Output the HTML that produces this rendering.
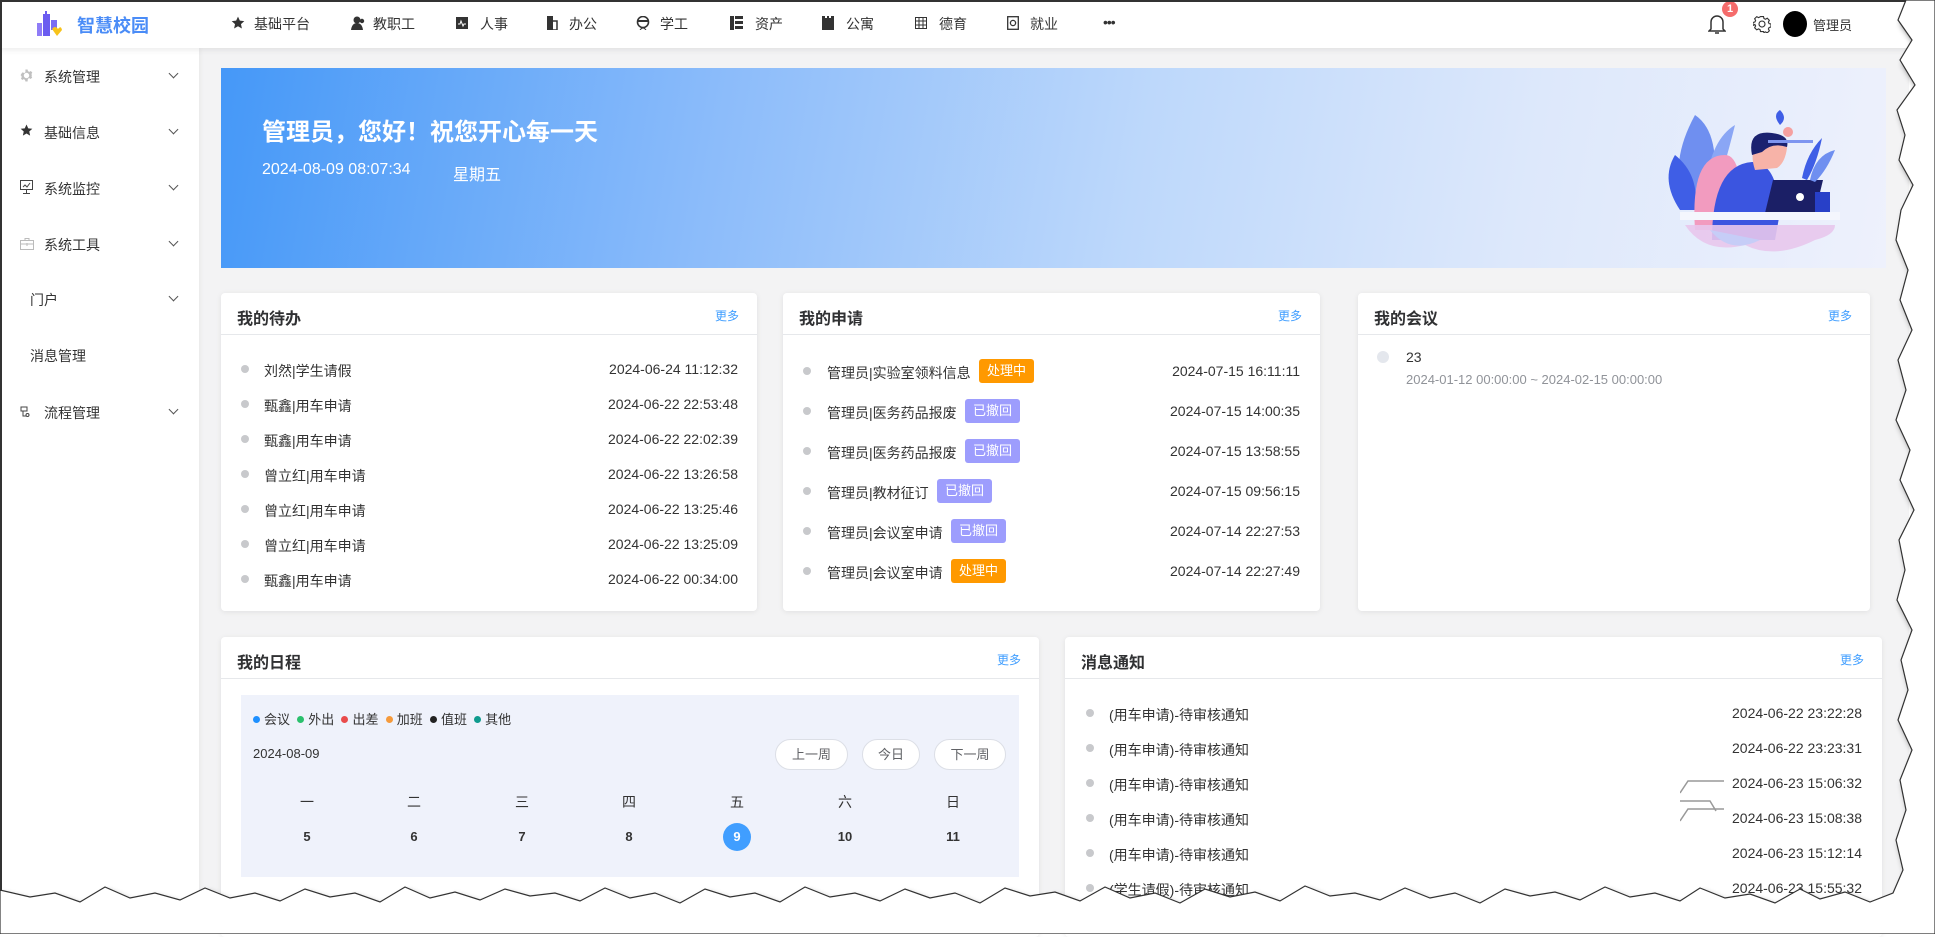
<!DOCTYPE html>
<html><head><meta charset="utf-8">
<style>
*{margin:0;padding:0;box-sizing:border-box}
body{width:1935px;height:934px;overflow:hidden;background:#fff;font-family:"Liberation Sans","Noto Sans CJK SC",sans-serif;color:#333;position:relative}
.a{position:absolute;white-space:nowrap}
#main{position:absolute;left:199px;top:48px;width:1710px;height:860px;background:#f3f3f4}
#nav{position:absolute;left:0;top:0;width:1935px;height:48px;background:#fff;box-shadow:0 2px 6px rgba(0,0,0,.08);z-index:2}
#side{position:absolute;left:0;top:48px;width:199px;height:860px;background:#fff;box-shadow:2px 0 4px rgba(0,0,0,.04)}
.navi{font-size:14px;color:#333;top:14px}
.side{font-size:14px;color:#333;left:44px}
.chev{left:170px;width:7px;height:7px;border-right:1px solid #555;border-bottom:1px solid #555;transform:rotate(45deg)}
.card{position:absolute;background:#fff;border-radius:4px;box-shadow:0 1px 6px rgba(0,0,0,.08)}
.card .hd{position:absolute;left:0;right:0;top:0;height:42px;border-bottom:1px solid #e6e8eb}
.card .tt{position:absolute;left:16px;top:12px;font-size:16px;font-weight:bold;color:#303133}
.card .more{position:absolute;right:18px;top:14px;font-size:12px;color:#409eff}
.dot{position:absolute;width:8px;height:8px;border-radius:50%;background:#c8c9cc}
.row{font-size:14px;color:#333}
.tag{position:absolute;height:24px;line-height:24px;padding:0 8px;border-radius:3px;color:#fff;font-size:13px}
.o{background:#ff9900}.p{background:#9d9dfd}
.btn{position:absolute;top:739px;height:31px;line-height:30px;border:1px solid #dcdfe6;border-radius:16px;background:#fff;font-size:13px;color:#606266;text-align:center}
.wd{position:absolute;font-size:14px;color:#333;transform:translateX(-50%)}
.dn{position:absolute;font-size:13px;font-weight:bold;color:#333;transform:translateX(-50%)}
.lg{display:inline-block;width:7px;height:7px;border-radius:50%;margin:0 4px 1px 0}
</style></head><body>
<div id="main"></div>
<div id="side">
</div>
<div id="nav">
  <svg class="a" style="left:34px;top:11px" width="28" height="26" viewBox="0 0 28 26">
    <rect x="3" y="12" width="5" height="13" fill="#8f7cf7"/><rect x="9" y="3" width="7" height="22" fill="#6b5cf0"/><rect x="11" y="0" width="2" height="4" fill="#6b5cf0"/>
    <rect x="17" y="9" width="6" height="10" fill="#7a6cf4"/><path d="M18 18 q3-4 6 0 q3-4 4 1 l-5 6z" fill="#f7c31b"/>
  </svg>
  <div class="a" style="left:77px;top:12px;font-size:18px;font-weight:bold;color:#4a8cf7">智慧校园</div>
  <svg class="a" style="left:231px;top:16px" width="14" height="14" viewBox="0 0 24 24"><path d="M12 1l3.2 7 7.6.8-5.7 5.1 1.6 7.6L12 17.6 5.3 21.5l1.6-7.6L1.2 8.8 8.8 8z" fill="#333"/></svg>
  <div class="a navi" style="left:254px">基础平台</div>
  <svg class="a" style="left:351px;top:16px" width="14" height="14" viewBox="0 0 14 14"><circle cx="6" cy="4" r="3.5" fill="#333"/><path d="M0 14q1-7 6-7t6 7z" fill="#333"/><circle cx="11" cy="5" r="2.2" fill="#333"/></svg>
  <div class="a navi" style="left:373px">教职工</div>
  <svg class="a" style="left:456px;top:17px" width="12" height="12" viewBox="0 0 12 12"><rect width="12" height="12" fill="#333"/><path d="M2 7h2l1-3 2 5 1-2h2" stroke="#fff" fill="none"/></svg>
  <div class="a navi" style="left:480px">人事</div>
  <svg class="a" style="left:546px;top:16px" width="12" height="14" viewBox="0 0 12 14"><path d="M1 0h6v14H1z" fill="#333"/><path d="M7 5h4v9H5" stroke="#333" fill="none" stroke-width="1.5"/></svg>
  <div class="a navi" style="left:569px">办公</div>
  <svg class="a" style="left:636px;top:16px" width="14" height="14" viewBox="0 0 14 14"><circle cx="7" cy="6" r="5.5" stroke="#333" stroke-width="1.6" fill="none"/><path d="M1.5 5h11" stroke="#333" stroke-width="2"/><path d="M4 14q3-4 6 0" stroke="#333" fill="none"/></svg>
  <div class="a navi" style="left:660px">学工</div>
  <svg class="a" style="left:730px;top:16px" width="13" height="14" viewBox="0 0 13 14"><rect width="4" height="14" fill="#333"/><rect x="5" y="0" width="8" height="3" fill="#333"/><rect x="5" y="5" width="8" height="3" fill="#333"/><rect x="5" y="10" width="8" height="3" fill="#333"/></svg>
  <div class="a navi" style="left:755px">资产</div>
  <svg class="a" style="left:822px;top:16px" width="12" height="14" viewBox="0 0 12 14"><path d="M0 0h3v2h2V0h2v2h2V0h3v14H0z" fill="#333"/></svg>
  <div class="a navi" style="left:846px">公寓</div>
  <svg class="a" style="left:915px;top:17px" width="12" height="12" viewBox="0 0 12 12"><rect x=".5" y=".5" width="11" height="11" fill="none" stroke="#333"/><path d="M0 4h12M0 8h12M4 0v12M8 0v12" stroke="#333"/></svg>
  <div class="a navi" style="left:939px">德育</div>
  <svg class="a" style="left:1007px;top:16px" width="12" height="14" viewBox="0 0 12 14"><rect x=".7" y=".7" width="10.6" height="12.6" fill="none" stroke="#333" stroke-width="1.3"/><circle cx="6" cy="7" r="2.6" fill="none" stroke="#333" stroke-width="1.3"/></svg>
  <div class="a navi" style="left:1030px">就业</div>
  <div class="a" style="left:1103px;top:14px;font-size:14px;color:#333;letter-spacing:-1px">•••</div>
  <svg class="a" style="left:1708px;top:13px" width="18" height="22" viewBox="0 0 18 22"><path d="M3 16V9a6 6 0 0 1 12 0v7l2 2H1z" fill="none" stroke="#333" stroke-width="1.5"/><path d="M7 20h4" stroke="#333" stroke-width="1.5"/></svg>
  <div class="a" style="left:1722px;top:1px;width:16px;height:16px;border-radius:8px;background:#f56c6c;color:#fff;font-size:11px;font-weight:bold;text-align:center;line-height:16px">1</div>
  <svg class="a" style="left:1753px;top:15px" width="18" height="18" viewBox="0 0 24 24"><path d="M12 8a4 4 0 1 0 0 8a4 4 0 1 0 0-8z M10 2h4l.6 2.6 2 1 2.4-1.3 2.8 2.8-1.3 2.4 1 2 2.5.5v4l-2.5.6-1 2 1.3 2.4-2.8 2.8-2.4-1.3-2 1L14 22h-4l-.6-2.5-2-1-2.4 1.3-2.8-2.8 1.3-2.4-1-2L0 14v-4l2.5-.6 1-2-1.3-2.4L5 2.2l2.4 1.3 2-1z" fill="none" stroke="#333" stroke-width="1.5"/></svg>
  <div class="a" style="left:1783px;top:11px;width:24px;height:26px;border-radius:50%;background:#000"></div>
  <div class="a" style="left:1813px;top:15px;font-size:13px;color:#333">管理员</div>
</div>

<!-- sidebar items -->
<svg class="a" style="left:20px;top:69px" width="13" height="13" viewBox="0 0 24 24"><path d="M12 7a5 5 0 1 0 0 10a5 5 0 1 0 0-10z M10 1h4l.7 3 2.5 1.2 2.7-1.5 2.8 2.8-1.5 2.7L22 12l-1 .9 1.5 2.7-2.8 2.8-2.7-1.5-2.5 1.2L14 23h-4l-.7-3-2.5-1.2-2.7 1.5-2.3-2.8 1.5-2.7L2 12l-1-.5 1.5-2.7L5 6l2.7 1.5L10 6z" fill="#c0c0c0"/></svg>
<div class="a side" style="top:67px">系统管理</div><div class="a chev" style="top:70px"></div>
<svg class="a" style="left:20px;top:124px" width="13" height="13" viewBox="0 0 24 24"><path d="M12 1l3.2 7 7.6.8-5.7 5.1 1.6 7.6L12 17.6 5.3 21.5l1.6-7.6L1.2 8.8 8.8 8z" fill="#333"/></svg>
<div class="a side" style="top:123px">基础信息</div><div class="a chev" style="top:126px"></div>
<svg class="a" style="left:20px;top:180px" width="13" height="14" viewBox="0 0 13 14"><rect x=".5" y=".5" width="12" height="9" fill="none" stroke="#444"/><path d="M3 7l2-2 2 2 3-4M6.5 10v3M3 13.5h7" stroke="#444" fill="none"/></svg>
<div class="a side" style="top:179px">系统监控</div><div class="a chev" style="top:182px"></div>
<svg class="a" style="left:20px;top:238px" width="14" height="12" viewBox="0 0 14 12"><rect x=".5" y="2.5" width="13" height="9" fill="none" stroke="#bbb"/><path d="M5 2.5V.5h4v2M0 6h14M7 5v3" stroke="#bbb" fill="none"/></svg>
<div class="a side" style="top:235px">系统工具</div><div class="a chev" style="top:238px"></div>
<div class="a side" style="top:290px;left:30px">门户</div><div class="a chev" style="top:293px"></div>
<div class="a side" style="top:346px;left:30px">消息管理</div>
<svg class="a" style="left:20px;top:406px" width="12" height="12" viewBox="0 0 12 12"><path d="M1 1h6v4H1zM3 5v5h3M6 9a1.5 1.5 0 1 0 3 0a1.5 1.5 0 1 0-3 0" stroke="#444" fill="none"/></svg>
<div class="a side" style="top:403px">流程管理</div><div class="a chev" style="top:406px"></div>

<!-- banner -->
<div class="a" style="left:221px;top:68px;width:1665px;height:200px;background:linear-gradient(100deg,#4598f8 0%,#8cbcfa 30%,#bdd8fb 55%,#dde8fb 78%,#eef1fc 100%)"></div>
<div class="a" style="left:262px;top:112px;font-size:24px;font-weight:bold;color:#fff">管理员，您好！祝您开心每一天</div>
<div class="a" style="left:262px;top:161px;font-size:16px;color:#fff">2024-08-09 08:07:34</div>
<div class="a" style="left:453px;top:161px;font-size:16px;color:#fff">星期五</div>
<svg class="a" style="left:1660px;top:80px" width="180" height="180" viewBox="0 0 180 180">
  <path d="M30 130q-25-40 5-95q30 20 15 95z" fill="#6f8ff0"/>
  <path d="M20 130q-20-30-5-55q25 20 20 55z" fill="#3f5ee6"/>
  <path d="M45 110q5-50 30-65q-10 40-20 70z" fill="#8aa6f5"/>
  <path d="M35 150q-5-75 30-75q20 0 15 75z" fill="#f29bbf"/>
  <path d="M52 160q0-75 40-78q25 0 28 50l-5 28z" fill="#3b55e0"/>
  <path d="M95 90q-8-25 10-32q20-5 22 10q-2 15-10 20z" fill="#f7b3a8"/>
  <path d="M92 75q-5-25 20-22q18 2 15 14q-15-5-25 5z" fill="#1b2270"/>
  <path d="M113 100h50l-8 33h-50z" fill="#1b1f66"/>
  <circle cx="140" cy="117" r="4" fill="#fff"/>
  <path d="M142 98q5-25 20-40q-5 25-15 42z" fill="#3f5ee6"/>
  <path d="M150 100q5-25 25-30q-8 20-20 32z" fill="#6f8ff0"/>
  <rect x="155" y="112" width="15" height="20" fill="#2840c8"/>
  <rect x="20" y="132" width="160" height="8" fill="#f4f6fd"/>
  <path d="M25 145q20 30 60 20q30 15 70-5q20-5 20-15z" fill="#e8c6ec" opacity=".9"/>
  <path d="M50 150q20 25 50 10z" fill="#c6cdf7"/>
  <rect x="108" y="60" width="45" height="3" fill="#7e95f0"/>
  <circle cx="128" cy="52" r="5" fill="#f5a0a0"/>
  <path d="M120 45q-8-10 0-15q8 8 0 15z" fill="#3f5ee6"/>
</svg>

<!-- card 1 -->
<div class="card" style="left:221px;top:293px;width:536px;height:318px">
  <div class="hd"><div class="tt">我的待办</div><div class="more">更多</div></div>
</div>

<!-- card 2 -->
<div class="card" style="left:783px;top:293px;width:537px;height:318px">
  <div class="hd"><div class="tt">我的申请</div><div class="more">更多</div></div>
</div>
<!-- card 3 -->
<div class="card" style="left:1358px;top:293px;width:512px;height:318px">
  <div class="hd"><div class="tt">我的会议</div><div class="more">更多</div></div>
</div>
<!-- card 4 -->
<div class="card" style="left:221px;top:637px;width:818px;height:300px">
  <div class="hd"><div class="tt">我的日程</div><div class="more">更多</div></div>
</div>
<!-- card 5 -->
<div class="card" style="left:1065px;top:637px;width:817px;height:300px">
  <div class="hd"><div class="tt">消息通知</div><div class="more">更多</div></div>
</div>

<!-- card1 rows -->
<div class="dot" style="left:241px;top:365px"></div><div class="a row" style="left:264px;top:361px">刘然|学生请假</div><div class="a row" style="right:1197px;top:361px">2024-06-24 11:12:32</div>
<div class="dot" style="left:241px;top:400px"></div><div class="a row" style="left:264px;top:396px">甄鑫|用车申请</div><div class="a row" style="right:1197px;top:396px">2024-06-22 22:53:48</div>
<div class="dot" style="left:241px;top:435px"></div><div class="a row" style="left:264px;top:431px">甄鑫|用车申请</div><div class="a row" style="right:1197px;top:431px">2024-06-22 22:02:39</div>
<div class="dot" style="left:241px;top:470px"></div><div class="a row" style="left:264px;top:466px">曾立红|用车申请</div><div class="a row" style="right:1197px;top:466px">2024-06-22 13:26:58</div>
<div class="dot" style="left:241px;top:505px"></div><div class="a row" style="left:264px;top:501px">曾立红|用车申请</div><div class="a row" style="right:1197px;top:501px">2024-06-22 13:25:46</div>
<div class="dot" style="left:241px;top:540px"></div><div class="a row" style="left:264px;top:536px">曾立红|用车申请</div><div class="a row" style="right:1197px;top:536px">2024-06-22 13:25:09</div>
<div class="dot" style="left:241px;top:575px"></div><div class="a row" style="left:264px;top:571px">甄鑫|用车申请</div><div class="a row" style="right:1197px;top:571px">2024-06-22 00:34:00</div>

<!-- card2 rows -->
<div class="dot" style="left:803px;top:367px"></div><div class="a row" style="left:827px;top:363px">管理员|实验室领料信息</div><div class="tag o" style="left:979px;top:359px">处理中</div><div class="a row" style="right:635px;top:363px">2024-07-15 16:11:11</div>
<div class="dot" style="left:803px;top:407px"></div><div class="a row" style="left:827px;top:403px">管理员|医务药品报废</div><div class="tag p" style="left:965px;top:399px">已撤回</div><div class="a row" style="right:635px;top:403px">2024-07-15 14:00:35</div>
<div class="dot" style="left:803px;top:447px"></div><div class="a row" style="left:827px;top:443px">管理员|医务药品报废</div><div class="tag p" style="left:965px;top:439px">已撤回</div><div class="a row" style="right:635px;top:443px">2024-07-15 13:58:55</div>
<div class="dot" style="left:803px;top:487px"></div><div class="a row" style="left:827px;top:483px">管理员|教材征订</div><div class="tag p" style="left:937px;top:479px">已撤回</div><div class="a row" style="right:635px;top:483px">2024-07-15 09:56:15</div>
<div class="dot" style="left:803px;top:527px"></div><div class="a row" style="left:827px;top:523px">管理员|会议室申请</div><div class="tag p" style="left:951px;top:519px">已撤回</div><div class="a row" style="right:635px;top:523px">2024-07-14 22:27:53</div>
<div class="dot" style="left:803px;top:567px"></div><div class="a row" style="left:827px;top:563px">管理员|会议室申请</div><div class="tag o" style="left:951px;top:559px">处理中</div><div class="a row" style="right:635px;top:563px">2024-07-14 22:27:49</div>

<!-- card3 -->
<div class="a" style="left:1377px;top:351px;width:12px;height:12px;border-radius:50%;background:#e4e7ed"></div>
<div class="a" style="left:1406px;top:349px;font-size:14px;color:#333">23</div>
<div class="a" style="left:1406px;top:372px;font-size:13px;color:#909399">2024-01-12 00:00:00 ~ 2024-02-15 00:00:00</div>

<!-- calendar -->
<div class="a" style="left:241px;top:695px;width:778px;height:182px;background:#eff2fb"></div>
<div class="a" style="left:253px;top:709px;font-size:13px;color:#333">
<span class="lg" style="background:#1e90ff"></span>会议&nbsp; <span class="lg" style="background:#2ac06d"></span>外出&nbsp; <span class="lg" style="background:#e94b4b"></span>出差&nbsp; <span class="lg" style="background:#f59a3b"></span>加班&nbsp; <span class="lg" style="background:#222"></span>值班&nbsp; <span class="lg" style="background:#0f9b8e"></span>其他</div>
<div class="a" style="left:253px;top:746px;font-size:13px;color:#333">2024-08-09</div>
<div class="btn" style="left:775px;width:73px">上一周</div>
<div class="btn" style="left:862px;width:58px">今日</div>
<div class="btn" style="left:934px;width:72px">下一周</div>
<div class="wd" style="left:307px;top:792px">一</div><div class="wd" style="left:414px;top:792px">二</div><div class="wd" style="left:522px;top:792px">三</div><div class="wd" style="left:629px;top:792px">四</div><div class="wd" style="left:737px;top:792px">五</div><div class="wd" style="left:845px;top:792px">六</div><div class="wd" style="left:953px;top:792px">日</div>
<div class="a" style="left:723px;top:823px;width:28px;height:28px;border-radius:50%;background:#409eff"></div>
<div class="dn" style="left:307px;top:829px">5</div><div class="dn" style="left:414px;top:829px">6</div><div class="dn" style="left:522px;top:829px">7</div><div class="dn" style="left:629px;top:829px">8</div><div class="dn" style="left:737px;top:829px;color:#fff">9</div><div class="dn" style="left:845px;top:829px">10</div><div class="dn" style="left:953px;top:829px">11</div>

<!-- card5 rows -->
<div class="dot" style="left:1086px;top:709px"></div><div class="a row" style="left:1109px;top:705px">(用车申请)-待审核通知</div><div class="a row" style="right:73px;top:705px">2024-06-22 23:22:28</div>
<div class="dot" style="left:1086px;top:744px"></div><div class="a row" style="left:1109px;top:740px">(用车申请)-待审核通知</div><div class="a row" style="right:73px;top:740px">2024-06-22 23:23:31</div>
<div class="dot" style="left:1086px;top:779px"></div><div class="a row" style="left:1109px;top:775px">(用车申请)-待审核通知</div><div class="a row" style="right:73px;top:775px">2024-06-23 15:06:32</div>
<div class="dot" style="left:1086px;top:814px"></div><div class="a row" style="left:1109px;top:810px">(用车申请)-待审核通知</div><div class="a row" style="right:73px;top:810px">2024-06-23 15:08:38</div>
<div class="dot" style="left:1086px;top:849px"></div><div class="a row" style="left:1109px;top:845px">(用车申请)-待审核通知</div><div class="a row" style="right:73px;top:845px">2024-06-23 15:12:14</div>
<div class="dot" style="left:1086px;top:884px"></div><div class="a row" style="left:1109px;top:880px">(学生请假)-待审核通知</div><div class="a row" style="right:73px;top:880px">2024-06-23 15:55:32</div>
<svg class="a" style="left:1680px;top:773px" width="45" height="50"><path d="M0 20l8-12h36M0 28h30l6 10M0 48l8-12h36" stroke="#999" stroke-width="1.5" fill="none"/></svg>

<!-- torn edges -->
<svg class="a" style="left:0;top:0;z-index:5" width="1935" height="934" viewBox="0 0 1935 934">
<defs><filter id="sh" x="-5%" y="-5%" width="110%" height="110%"><feDropShadow dx="3" dy="4" stdDeviation="3" flood-color="#000" flood-opacity=".45"/></filter></defs>
<path filter="url(#sh)" fill="#fff" stroke="#333" stroke-width="1.2" d="M1906 0 L1898 20 L1912 40 L1900 60 L1915 85 L1897 110 L1905 135 L1899 160 L1913 185 L1901 210 L1896 240 L1908 270 L1900 300 L1912 330 L1898 360 L1906 390 L1896 420 L1910 450 L1900 480 L1914 510 L1899 540 L1905 570 L1897 600 L1912 630 L1901 660 L1908 690 L1898 720 L1912 750 L1900 780 L1906 810 L1896 840 L1903 870 L1893 893 L1870 902 L1845 892 L1820 899 L1800 889 L1775 903 L1750 894 L1725 898 L1700 888 L1680 901 L1655 893 L1630 897 L1605 887 L1580 900 L1555 892 L1530 896 L1505 889 L1480 903 L1455 893 L1430 898 L1405 888 L1380 900 L1355 893 L1330 896 L1305 886 L1280 901 L1255 892 L1230 897 L1205 889 L1180 903 L1155 893 L1130 898 L1105 887 L1080 901 L1055 892 L1030 896 L1005 888 L980 903 L955 893 L930 898 L905 889 L880 901 L855 893 L830 897 L805 887 L780 902 L755 893 L730 897 L705 889 L680 903 L655 893 L630 898 L605 888 L580 901 L555 893 L530 896 L505 889 L480 900 L455 892 L430 898 L405 887 L380 902 L355 893 L330 897 L305 889 L280 901 L255 893 L230 898 L205 888 L180 900 L155 893 L130 898 L105 887 L80 902 L55 893 L30 897 L0 890 L0 934 L1935 934 L1935 0 Z"/>
<path d="M1 0V890M0 1H1906" stroke="#333" stroke-width="2"/>
</svg>
</body></html>
